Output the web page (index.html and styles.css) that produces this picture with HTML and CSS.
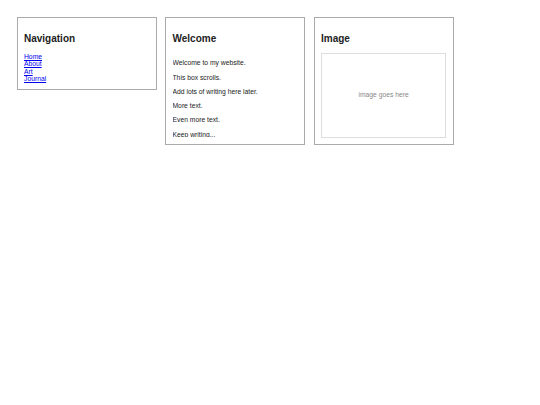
FILE: index.html
```html
<!DOCTYPE html>
<html>
<head>
<meta charset="utf-8">
<link rel="stylesheet" href="styles.css">
</head>
<body>
<div class="row">
  <div class="box">
    <h2 class="title">Navigation</h2>
    <ul class="nav">
      <li><a href="#">Home</a></li>
      <li><a href="#">About</a></li>
      <li><a href="#">Art</a></li>
      <li><a href="#">Journal</a></li>
    </ul>
  </div>
  <div class="box">
    <h2 class="title">Welcome</h2>
    <div class="scroll">
      <p>Welcome to my website.</p>
      <p>This box scrolls.</p>
      <p>Add lots of writing here later.</p>
      <p>More text.</p>
      <p>Even more text.</p>
      <p>Keep writing...</p>
    </div>
  </div>
  <div class="box">
    <h2 class="title">Image</h2>
    <div class="placeholder">image goes here</div>
  </div>
</div>
</body>
</html>
```

FILE: styles.css
```css
html, body {
  margin: 0;
  padding: 0;
  background: #fff;
}
body {
  font-family: "Liberation Sans", Arial, sans-serif;
  font-size: 6.75px;
  line-height: 7.5px;
  color: #222;
}
.row {
  display: flex;
  align-items: flex-start;
  gap: 8.25px;
  padding: 16.5px;
}
.box {
  box-sizing: border-box;
  width: 140.25px;
  border: 0.75px solid #aaa;
  padding: 7px 6.5px 6.5px;
  background: #fff;
}
.title {
  font-size: 10px;
  line-height: 11.5px;
  font-weight: bold;
  margin: 8.3px 0;
  color: #222;
}
.nav {
  list-style: none;
  margin: 0;
  padding: 0;
}
.nav a {
  color: #00e;
}
.scroll {
  height: 84.5px;
  overflow-y: auto;
  scrollbar-width: none;
}
.scroll p {
  margin: 6.75px 0;
}
.placeholder {
  box-sizing: border-box;
  height: 85px;
  border: 0.75px solid #ddd;
  display: flex;
  align-items: center;
  justify-content: center;
  color: #888;
}
```
